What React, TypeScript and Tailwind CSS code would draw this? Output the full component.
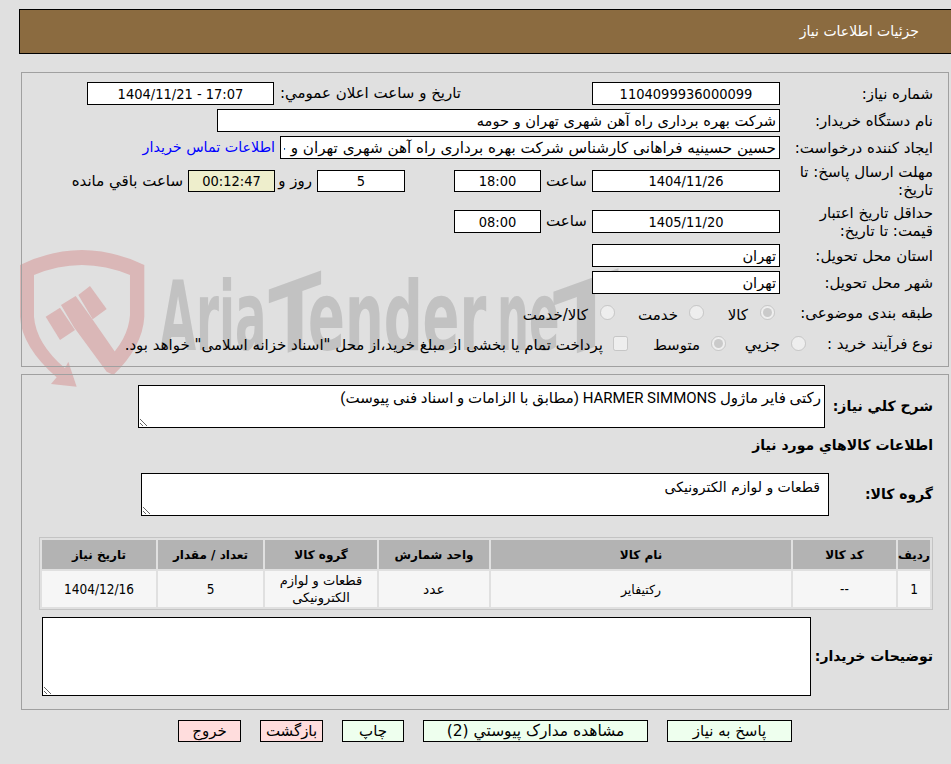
import React from "react";

const inputCls = "h-[23px] border border-black text-black outline-none shrink-0 px-[3px]";
const numFont = "font-['DejaVu_Sans_Condensed',sans-serif] text-[14.5px]";
const faFont = "font-['DejaVu_Sans',sans-serif] text-[14.6px]";

function Field({
  value,
  w,
  center = true,
  bg = "bg-white",
  ltr = false,
}: {
  value: string;
  w: string;
  center?: boolean;
  bg?: string;
  ltr?: boolean;
}) {
  return (
    <input
      readOnly
      dir={ltr ? "ltr" : "rtl"}
      value={value}
      className={`${inputCls} ${w} ${bg} ${center ? `text-center ${numFont}` : `text-right ${faFont}`}`}
    />
  );
}

function Row({ label, h = "h-[23px]", children }: { label: string; h?: string; children?: React.ReactNode }) {
  return (
    <div className={`flex items-center ${h}`}>
      <div className="w-[140px] ml-[13px] shrink-0 text-[15px] leading-[18px] text-right">{label}</div>
      {children}
    </div>
  );
}

function Radio({ checked = false }: { checked?: boolean }) {
  return <input type="radio" disabled defaultChecked={checked} className="block w-[15px] h-[15px] m-0 shrink-0" />;
}

function Btn({ text, w, pink = false, size = "text-[15px]" }: { text: string; w: string; pink?: boolean; size?: string }) {
  return (
    <button
      className={`h-[22px] ${w} border border-black ${size} leading-[20px] text-black font-['DejaVu_Sans',sans-serif] ${
        pink ? "bg-[#ffdddd]" : "bg-[#eeffee]"
      }`}
    >
      {text}
    </button>
  );
}

function Watermark() {
  const f = "'DejaVu Sans Condensed','DejaVu Sans',sans-serif";
  return (
    <svg dir="ltr" className="absolute left-0 top-0 pointer-events-none" width="951" height="400" viewBox="0 0 951 400">
      <g transform="translate(10 240) scale(0.3333)" fill="#dab7b7">
        <path d="M30 75 Q215 -15 403 75 L403 230 Q398 320 310 405 L285 365 Q355 300 360 225 L360 105 Q215 45 72 105 L72 230 Q78 310 165 385 L175 365 L200 440 L123 432 L140 412 Q35 320 30 230 Z" />
        <polygon points="205,165 240,138 290,207 248,238" />
        <polygon points="153,195 197,168 245,235 318,340 345,320 310,405 290,395 192,262" />
        <polygon points="107,230 150,203 195,270 150,300" />
      </g>
      <g fill="#c2c2c2" fontFamily={f} fontWeight="700" fontSize="96" direction="ltr">
        <text transform="translate(160 350) scale(0.54 1)">Aria</text>
        <text textAnchor="middle" transform="translate(295 350) skewY(-20) scale(0.9 1)">T</text>
        <text transform="translate(308 350) scale(0.63 1)">ender</text>
        <text transform="translate(497 350) scale(0.52 1)">ne</text>
        <text textAnchor="middle" transform="translate(586 350) skewY(-20) scale(1.12 1)">T</text>
      </g>
    </svg>
  );
}

export default function App() {
  return (
    <div dir="rtl" className="relative w-[951px] h-[764px] overflow-hidden bg-[#e0e0e0] text-black font-['DejaVu_Sans',sans-serif]">
      <Watermark />
      <div className="relative flex flex-col">
        <div className="mt-[9px] mr-0 ml-[19px] h-[45px] flex items-center bg-[#8b6b40] border border-black border-r-0 pr-[32px] text-[14px] text-white">
          جزئیات اطلاعات نیاز
        </div>

        <section className="mt-[18px] ml-[21px] mr-[2px] h-[295px] border border-[#a0a0a0] pt-[9px] pr-[15px] flex flex-col">
          <div className="mb-[4px]">
            <Row label="شماره نیاز:">
              <Field value="1104099936000099" w="w-[188px]" />
              <span className="mr-[131px] w-[181px] shrink-0 text-[15px] whitespace-nowrap">تاریخ و ساعت اعلان عمومي:</span>
              <span className="w-[6px] shrink-0" />
              <Field value="1404/11/21 - 17:07" w="w-[187px]" ltr />
            </Row>
          </div>
          <div className="mb-[4px]">
            <Row label="نام دستگاه خریدار:">
              <Field value="شرکت بهره برداری راه آهن شهری تهران و حومه" w="w-[563px]" center={false} />
            </Row>
          </div>
          <div>
            <Row label="ایجاد کننده درخواست:">
              <Field value="حسین حسینیه فراهانی کارشناس شرکت بهره برداری راه آهن شهری تهران و حومه" w="w-[500px] !text-[15.2px]" center={false} />
              <a className="mr-[5px] text-[14.3px] text-[#0000ff] whitespace-nowrap">اطلاعات تماس خریدار</a>
            </Row>
          </div>
          <div className="mt-[3px]">
            <Row label="مهلت ارسال پاسخ: تا تاریخ:" h="h-[38px]">
              <Field value="1404/11/26" w="w-[188px] !h-[22px]" />
              <span className="w-[51px] shrink-0 text-center text-[15px]">ساعت</span>
              <Field value="18:00" w="w-[87px] !h-[22px]" />
              <span className="w-[49px] shrink-0" />
              <Field value="5" w="w-[88px] !h-[22px]" />
              <span className="w-[42px] pr-[5px] shrink-0 text-right text-[15px] whitespace-nowrap">روز و</span>
              <Field value="00:12:47" w="w-[87px] !h-[22px]" bg="bg-[#eeeecc]" />
              <span className="mr-[5px] text-[15px] whitespace-nowrap">ساعت باقي مانده</span>
            </Row>
          </div>
          <div className="mt-[3px]">
            <Row label="حداقل تاریخ اعتبار قیمت: تا تاریخ:" h="h-[37px]">
              <Field value="1405/11/20" w="w-[188px]" />
              <span className="w-[51px] shrink-0 text-center text-[15px]">ساعت</span>
              <Field value="08:00" w="w-[87px]" />
            </Row>
          </div>
          <div className="mt-[4px] mb-[4px]">
            <Row label="استان محل تحویل:">
              <Field value="تهران" w="w-[188px]" center={false} />
            </Row>
          </div>
          <Row label="شهر محل تحویل:">
            <Field value="تهران" w="w-[188px]" center={false} />
          </Row>
          <div className="mt-[4px]">
            <Row label="طبقه بندی موضوعی:" h="h-[29px]">
              <span className="mr-[5px]"><Radio checked /></span>
              <span className="w-[56px] pr-[12px] shrink-0 text-[15px] pt-[5px] whitespace-nowrap">کالا</span>
              <Radio />
              <span className="w-[74px] pr-[11px] shrink-0 text-[15px] pt-[5px] whitespace-nowrap">خدمت</span>
              <Radio />
              <span className="pr-[12px] text-[15px] pt-[5px] whitespace-nowrap">کالا/خدمت</span>
            </Row>
          </div>
          <div className="mt-[2px]">
            <Row label="نوع فرآیند خرید :" h="h-[29px]">
              <span className="mr-[-26px]"><Radio /></span>
              <span className="w-[65px] pr-[11px] shrink-0 text-[15.5px] pt-[3px] whitespace-nowrap">جزیي</span>
              <Radio checked />
              <span className="w-[83px] pr-[11px] shrink-0 text-[15px] pt-[3px] whitespace-nowrap">متوسط</span>
              <input type="checkbox" disabled className="block w-[15px] h-[15px] m-0 shrink-0" />
              <span className="mr-[10px] text-[15px] pt-[3px] whitespace-nowrap">
                پرداخت تمام یا بخشی از مبلغ خرید،از محل "اسناد خزانه اسلامی" خواهد بود.
              </span>
            </Row>
          </div>
        </section>

        <section className="mt-[7px] ml-[21px] mr-[2px] h-[336px] border border-[#a0a0a0] pt-[10px] pr-[15px] flex flex-col">
          <div className="flex items-center">
            <div className="w-[108px] shrink-0 text-[14px] font-bold">شرح کلي نیاز:</div>
            <textarea
              readOnly
              dir="rtl"
              className="w-[687px] h-[43px] border border-black bg-white font-['Roboto','DejaVu_Sans',sans-serif] text-[15px] leading-[24px] px-[3px] py-0 outline-none block"
              defaultValue="رکتی فایر ماژول HARMER SIMMONS (مطابق با الزامات و اسناد فنی پیوست)"
            />
          </div>
          <div className="mt-[7px] text-[14px] font-bold leading-[20px]">اطلاعات کالاهاي مورد نیاز</div>
          <div className="mt-[18px] flex items-center">
            <div className="w-[104px] shrink-0 text-[14px] font-bold">گروه کالا:</div>
            <textarea
              readOnly
              dir="rtl"
              className="w-[688px] h-[43px] border border-black bg-white text-[14px] leading-[26px] px-[8px] py-0 outline-none block"
              defaultValue="قطعات و لوازم الکترونیکی"
            />
          </div>
          <table className="mt-[21px] w-[894px] h-[73px] border border-[#c4c4c4] border-separate border-spacing-[2px] table-fixed text-center">
            <thead>
              <tr className="h-[29px] text-[12px] font-bold">
                <th className="w-[32px] bg-[#b3b3b3] p-0">ردیف</th>
                <th className="w-[103px] bg-[#b3b3b3] p-0">کد کالا</th>
                <th className="w-[300px] bg-[#b3b3b3] p-0">نام کالا</th>
                <th className="w-[110px] bg-[#b3b3b3] p-0">واحد شمارش</th>
                <th className="w-[112px] bg-[#b3b3b3] p-0">گروه کالا</th>
                <th className="w-[105px] bg-[#b3b3b3] p-0">تعداد / مقدار</th>
                <th className="bg-[#b3b3b3] p-0">تاریخ نیاز</th>
              </tr>
            </thead>
            <tbody>
              <tr className="h-[36px] leading-[17px]">
                <td className="bg-[#f6f6f6] p-0 pt-px text-[13.5px] font-['DejaVu_Sans_Condensed',sans-serif]">1</td>
                <td className="bg-[#f6f6f6] p-0 pt-px text-[13.5px] font-['DejaVu_Sans_Condensed',sans-serif]">--</td>
                <td className="bg-[#f6f6f6] p-0 pt-px text-[12.5px]">رکتیفایر</td>
                <td className="bg-[#f6f6f6] p-0 pt-px text-[14px]">عدد</td>
                <td className="bg-[#f6f6f6] p-0 text-[13px]">قطعات و لوازم الکترونیکی</td>
                <td className="bg-[#f6f6f6] p-0 pt-px text-[13.5px] font-['DejaVu_Sans_Condensed',sans-serif]">5</td>
                <td className="bg-[#f6f6f6] p-0 pt-px text-[13.5px] font-['DejaVu_Sans_Condensed',sans-serif]">1404/12/16</td>
              </tr>
            </tbody>
          </table>
          <div className="mt-[7px] flex items-center">
            <div className="w-[122px] shrink-0 text-[14px] font-bold">توضیحات خریدار:</div>
            <textarea
              readOnly
              dir="rtl"
              className="w-[769px] h-[79px] border border-black bg-white text-[13px] px-[3px] py-0 outline-none block"
            />
          </div>
        </section>

        <div className="mt-[10px] mr-[159px] flex gap-[19px]">
          <Btn text="پاسخ به نیاز" w="w-[125px]" />
          <Btn text="مشاهده مدارک پیوستي (2)" w="w-[225px]" size="text-[15.5px]" />
          <Btn text="چاپ" w="w-[62px]" />
          <Btn text="بازگشت" w="w-[63px]" pink />
          <Btn text="خروج" w="w-[63px]" pink />
        </div>
      </div>
    </div>
  );
}
